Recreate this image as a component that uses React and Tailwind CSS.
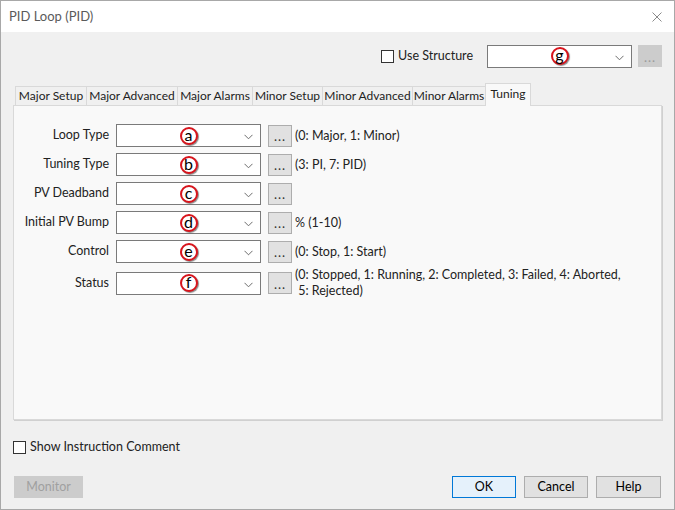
import React from 'react'

const ROWS = [
  { label: 'Loop Type', tag: 'a', hint: ['(0: Major, 1: Minor)'] },
  { label: 'Tuning Type', tag: 'b', hint: ['(3: PI, 7: PID)'] },
  { label: 'PV Deadband', tag: 'c', hint: [] },
  { label: 'Initial PV Bump', tag: 'd', hint: ['% (1-10)'] },
  { label: 'Control', tag: 'e', hint: ['(0: Stop, 1: Start)'] },
  { label: 'Status', tag: 'f', hint: ['(0: Stopped, 1: Running, 2: Completed, 3: Failed, 4: Aborted,', ' 5: Rejected)'] },
]

const TABS = [
  { label: 'Major Setup', w: 'w-[72px]' },
  { label: 'Major Advanced', w: 'w-[92px]' },
  { label: 'Major Alarms', w: 'w-[76px]' },
  { label: 'Minor Setup', w: 'w-[71px]' },
  { label: 'Minor Advanced', w: 'w-[91px]' },
  { label: 'Minor Alarms', w: 'w-[74px]' },
]

function Badge({ children }) {
  return (
    <span className="absolute left-1/2 top-1/2 -translate-x-1/2 -translate-y-1/2 w-[18px] h-[18px] rounded-full border-2 border-[#d8141c] bg-white shadow-[1px_1px_1px_rgba(0,0,0,0.45)] flex items-center justify-center text-[16px] leading-none text-black pb-[2px]">
      {children}
    </span>
  )
}

function Chevron() {
  return (
    <svg width="9" height="6" viewBox="0 0 9 6" className="absolute right-[7px] top-[9px]">
      <polyline points="0.5,0.8 4.5,4.8 8.5,0.8" fill="none" stroke="#6d6d6d" strokeWidth="1" />
    </svg>
  )
}

function Combo({ tag, w = 'w-[145px]' }) {
  return (
    <div className={`relative ${w} h-[23px] bg-white border border-[#7a7a7a]`}>
      {tag && <Badge>{tag}</Badge>}
      <Chevron />
    </div>
  )
}

function Dots({ disabled }) {
  return (
    <div
      className={
        'w-[24px] h-[22px] flex items-center justify-center text-[13px] leading-none pt-[2px] tracking-[1px] border ' +
        (disabled ? 'bg-[#cccccc] border-[#cccccc] text-[#9a9a9a]' : 'bg-[#e1e1e1] border-[#adadad] text-[#333]')
      }
    >
      ...
    </div>
  )
}

function Checkbox() {
  return <div className="w-[13px] h-[13px] border border-[#333] bg-white shrink-0" />
}

function Button({ children, variant }) {
  const cls = {
    primary: 'bg-[#e5f1fb] border-[#0078d7] text-black',
    normal: 'bg-[#e1e1e1] border-[#adadad] text-black',
    disabled: 'bg-[#cccccc] border-[#cccccc] text-[#a0a0a0]',
  }[variant]
  return (
    <div className={`h-[22px] flex items-center justify-center border text-[12.5px] ${cls}`}>{children}</div>
  )
}

export default function App() {
  return (
    <div
      className="w-[675px] h-[510px] bg-[#f0f0f0] border border-[#a8a8a8] flex flex-col text-[#222] whitespace-nowrap"
      style={{ fontFamily: 'Lato, "Noto Sans", sans-serif' }}
    >
      {/* Title bar */}
      <div className="h-[31px] bg-white flex items-center justify-between pl-[8px] pr-[12px] shrink-0">
        <span className="text-[13px] text-[#5a5a5a]">PID Loop (PID)</span>
        <svg width="10" height="10" viewBox="0 0 10 10">
          <path d="M0.5 0.5 L9.5 9.5 M9.5 0.5 L0.5 9.5" stroke="#8a8a8a" strokeWidth="1" />
        </svg>
      </div>

      {/* Use Structure */}
      <div className="flex items-center justify-end pr-[12px] mt-[12px] h-[24px]">
        <Checkbox />
        <span className="text-[12.5px] ml-[4px] mr-[14px]">Use Structure</span>
        <Combo tag="g" w="w-[145px]" />
        <div className="ml-[6px]">
          <Dots disabled />
        </div>
      </div>

      {/* Tabs */}
      <div className="flex items-end px-[14px] mt-[14px] h-[23px] relative z-10">
        {TABS.map((t) => (
          <div
            key={t.label}
            className={`${t.w} h-[19px] -mr-px border border-b-0 border-[#d9d9d9] bg-[#f0f0f0] flex items-center justify-center text-[12px] text-[#222]`}
          >
            {t.label}
          </div>
        ))}
        <div className="w-[46px] h-[23px] border border-b-0 border-[#d9d9d9] bg-[#f9f9f9] flex items-start justify-center pt-[1px] text-[12px] text-[#222] -mb-px">
          Tuning
        </div>
      </div>

      {/* Panel */}
      <div className="mx-[12px] h-[315px] border border-[#d9d9d9] bg-[#f9f9f9] shadow-[1px_1px_0_#d0d0d0] pt-[18px] flex flex-col gap-[6px]">
        {ROWS.map((r) => (
          <div key={r.label} className={`flex items-center ${r.hint.length > 1 ? 'h-[28px]' : 'h-[23px]'}`}>
            <div className="w-[96px] text-right text-[12.5px] pr-[1px]">{r.label}</div>
            <div className="ml-[6px]">
              <Combo tag={r.tag} />
            </div>
            <div className="ml-[7px]">
              <Dots />
            </div>
            <div className="ml-[3px] text-[12.5px] leading-[16px] whitespace-pre">
              {r.hint.map((h) => (
                <div key={h}>{h}</div>
              ))}
            </div>
          </div>
        ))}
      </div>

      {/* Show Instruction Comment */}
      <div className="flex items-center px-[12px] mt-[20px] h-[14px]">
        <Checkbox />
        <span className="text-[12.5px] ml-[4px]">Show Instruction Comment</span>
      </div>

      {/* Buttons */}
      <div className="flex items-center px-[13px] mt-[22px]">
        <div className="w-[69px]">
          <Button variant="disabled">Monitor</Button>
        </div>
        <div className="ml-auto flex gap-[8px]">
          <div className="w-[64px]">
            <Button variant="primary">OK</Button>
          </div>
          <div className="w-[64px]">
            <Button variant="normal">Cancel</Button>
          </div>
          <div className="w-[65px]">
            <Button variant="normal">Help</Button>
          </div>
        </div>
      </div>
    </div>
  )
}
